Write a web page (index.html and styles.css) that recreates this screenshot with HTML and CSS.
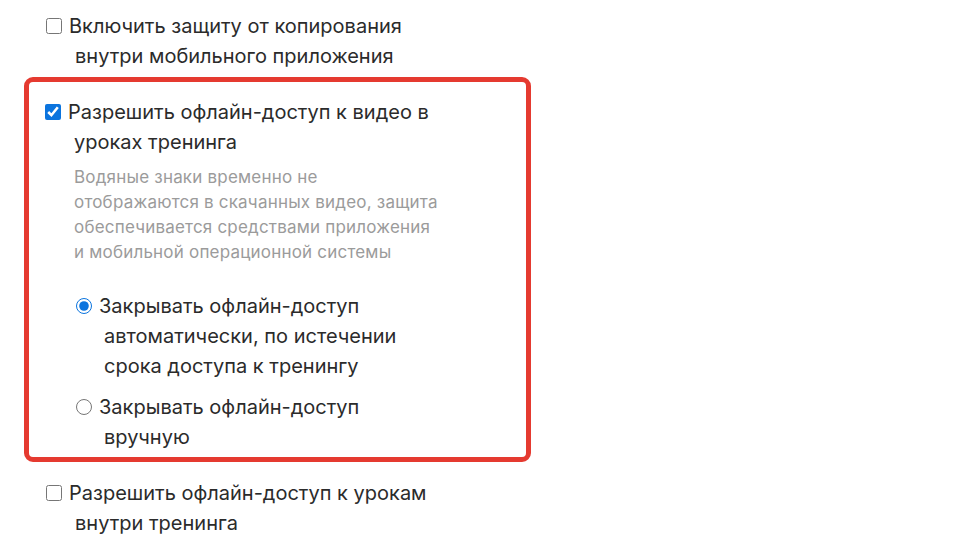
FILE: index.html
```html
<!DOCTYPE html>
<html lang="ru">
<head>
    <meta charset="UTF-8">
    <meta name="viewport" content="width=device-width, initial-scale=1.0">
    <title>Настройки защиты</title>
    <link rel="stylesheet" href="styles.css">
</head>
<body>
    <div class="settings">
        <label class="option outer">
            <input type="checkbox">Включить защиту от копирования<br>внутри мобильного приложения
        </label>

        <div class="highlight">
            <label class="option">
                <input type="checkbox" checked>Разрешить офлайн-доступ к видео в<br>уроках тренинга
            </label>
            <p class="hint">
                Водяные знаки временно не<br>
                отображаются в скачанных видео, защита<br>
                обеспечивается средствами приложения<br>
                и мобильной операционной системы
            </p>
            <div class="radios">
                <label class="radio">
                    <input type="radio" name="offline" checked>Закрывать офлайн-доступ<br>автоматически, по истечении<br>срока доступа к тренингу
                </label>
                <label class="radio">
                    <input type="radio" name="offline">Закрывать офлайн-доступ<br>вручную
                </label>
            </div>
        </div>

        <label class="option outer last">
            <input type="checkbox">Разрешить офлайн-доступ к урокам<br>внутри тренинга
        </label>
    </div>
</body>
</html>
```

FILE: styles.css
```css
body {
    margin: 0;
    background-color: #fff;
    color: #2b2b2b;
    font-family: Inter, "Noto Sans", sans-serif;
}

.settings {
    padding: 11px 0 0 24px;
    width: 507px;
}

.option {
    display: block;
    font-size: 20px;
    line-height: 30px;
    padding-left: 29px;
    text-indent: -29px;
}

.option input {
    width: 16px;
    height: 16px;
    margin: 0 7px 0 0;
    vertical-align: -1px;
    accent-color: #0b74de;
}

.outer {
    margin-left: 22px;
}

.highlight {
    margin-top: 6px;
    border: 5px solid #e53a30;
    border-radius: 9px;
    padding: 15px 16px 5px 16px;
}

.hint {
    margin: 8px 0 0 29px;
    font-size: 17px;
    line-height: 25px;
    color: #9b9b9b;
    letter-spacing: 0.2px;
}

.radios {
    margin: 26px 0 0 31px;
    display: flex;
    flex-direction: column;
    gap: 11px;
}

.radio {
    display: block;
    font-size: 20px;
    line-height: 30px;
    padding-left: 28px;
    text-indent: -28px;
}

.radio input {
    width: 16px;
    height: 16px;
    margin: 0 7px 0 0;
    vertical-align: -1px;
    accent-color: #0b74de;
}

.last {
    margin-top: 16px;
}
```
